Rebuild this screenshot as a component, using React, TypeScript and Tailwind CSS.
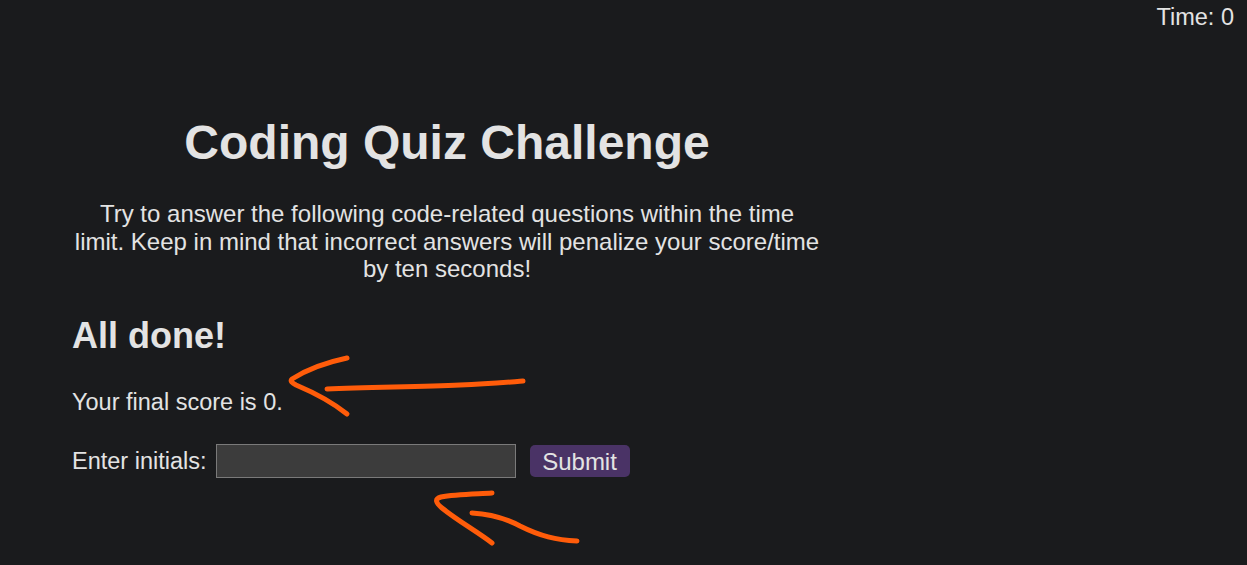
export default function App() {
  return (
    <div className="relative min-h-screen bg-[#1a1b1d] text-[#e3e3e3] font-['Liberation_Sans',Arial,sans-serif] leading-[1.15]">
      <header className="flex justify-end pr-[13px] pt-[4px] text-[23.5px] leading-[1.15]">
        Time: 0
      </header>

      <main className="ml-[72px] w-[750px]">
        <section className="text-center">
          <h1 className="mt-[84px] text-[48px] leading-[1.15] font-bold">
            Coding Quiz Challenge
          </h1>
          <p className="mt-[30px] text-[24px] leading-[1.15]">
            Try to answer the following code-related questions within the time
            limit. Keep in mind that incorrect answers will penalize your
            score/time by ten seconds!
          </p>
        </section>

        <section>
          <h2 className="mt-[32px] text-[36px] leading-[1.15] font-bold">
            All done!
          </h2>
          <p className="mt-[33px] text-[23.5px] leading-[1.15]">
            Your final score is 0.
          </p>
          <form
            className="mt-[28px] flex items-center"
            onSubmit={(e) => e.preventDefault()}
          >
            <label className="text-[23.5px] leading-[1.15]">Enter initials:</label>
            <input
              type="text"
              className="ml-[9px] h-[34px] w-[300px] border border-[#7a7a7a] bg-[#3c3c3c] px-2 text-[20px] text-[#e3e3e3] outline-none"
            />
            <button
              type="submit"
              className="ml-[14px] h-[32px] w-[100px] rounded-[5px] bg-[#4a3366] text-[24px] leading-[1.15] text-[#e3e3e3]"
            >
              Submit
            </button>
          </form>
        </section>
      </main>

      {/* hand-drawn annotations over the page */}
      <svg
        className="pointer-events-none absolute left-0 top-0"
        width="1247"
        height="565"
        viewBox="0 0 1247 565"
        fill="none"
        stroke="#ff5c0a"
        strokeWidth="5"
        strokeLinecap="round"
        strokeLinejoin="round"
      >
        <path d="M347 358 C 328 362, 306 370, 292 379 C 290 381, 292 383, 296 385 C 315 393, 332 402, 347 414" />
        <path d="M327 389 C 370 387, 420 387, 460 385 C 490 384, 510 382, 523 381" />
        <path d="M492 493 C 475 494, 455 494, 441 497 C 434 499, 436 503, 442 508 C 458 521, 478 532, 492 543" />
        <path d="M472 513 C 490 514, 505 518, 520 526 C 540 536, 556 540, 577 541" />
      </svg>
    </div>
  );
}
